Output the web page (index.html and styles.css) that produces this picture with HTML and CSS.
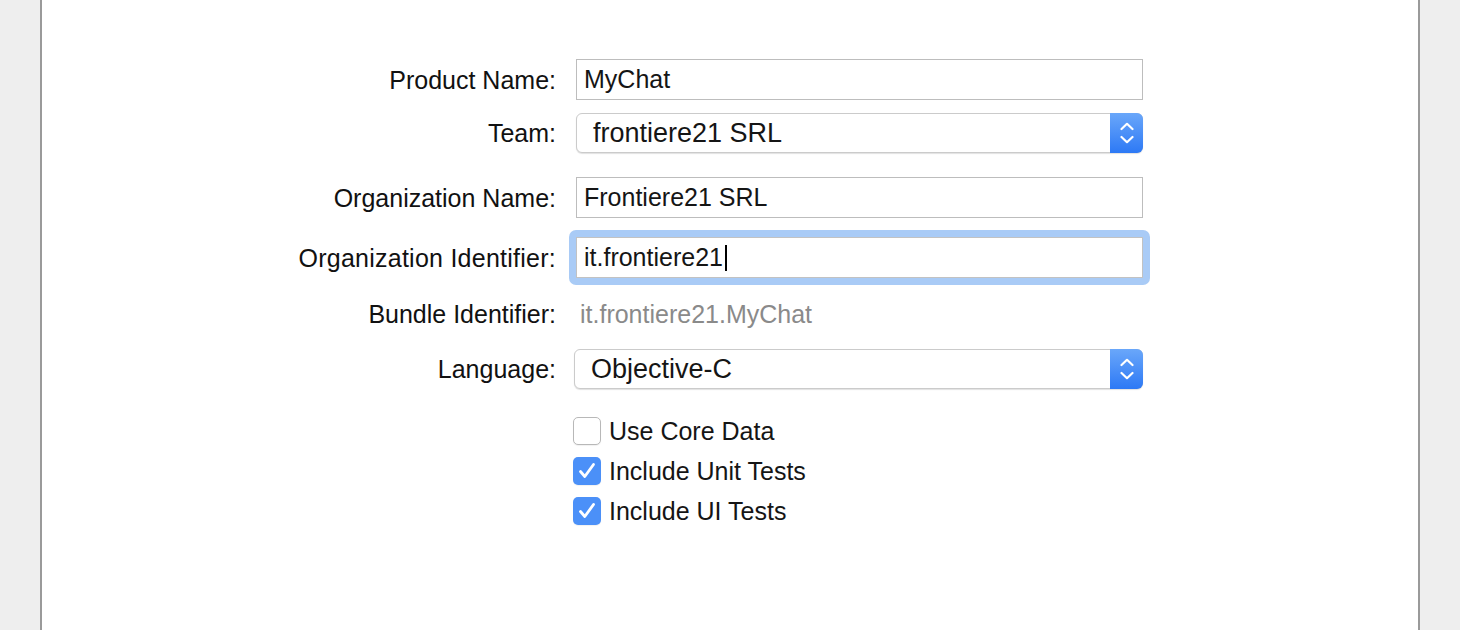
FILE: index.html
```html
<!DOCTYPE html>
<html>
<head>
<meta charset="utf-8">
<link rel="stylesheet" href="styles.css">
</head>
<body>
<div class="panel">
  <div class="form">
    <div class="row r-product">
      <div class="label">Product Name:</div>
      <div class="field">MyChat</div>
    </div>
    <div class="row r-team">
      <div class="label">Team:</div>
      <div class="popup">
        <span class="popup-text">frontiere21 SRL</span>
        <span class="stepper">
          <svg width="14" height="22" viewBox="0 0 14 22"><path d="M1.5 7 L7 1.8 L12.5 7 M1.5 15 L7 20.2 L12.5 15" fill="none" stroke="#fff" stroke-width="2.2" stroke-linecap="round" stroke-linejoin="round"/></svg>
        </span>
      </div>
    </div>
    <div class="row r-org">
      <div class="label">Organization Name:</div>
      <div class="field">Frontiere21 SRL</div>
    </div>
    <div class="row r-orgid">
      <div class="label">Organization Identifier:</div>
      <div class="focus-ring">
        <div class="field focused">it.frontiere21<span class="caret"></span></div>
      </div>
    </div>
    <div class="row r-bundle">
      <div class="label">Bundle Identifier:</div>
      <div class="value">it.frontiere21.MyChat</div>
    </div>
    <div class="row r-lang">
      <div class="label">Language:</div>
      <div class="popup lang">
        <span class="popup-text">Objective-C</span>
        <span class="stepper">
          <svg width="14" height="22" viewBox="0 0 14 22"><path d="M1.5 7 L7 1.8 L12.5 7 M1.5 15 L7 20.2 L12.5 15" fill="none" stroke="#fff" stroke-width="2.2" stroke-linecap="round" stroke-linejoin="round"/></svg>
        </span>
      </div>
    </div>
    <div class="row r-check1">
      <div class="label"></div>
      <div class="check"><span class="box"></span><span>Use Core Data</span></div>
    </div>
    <div class="row r-check2">
      <div class="label"></div>
      <div class="check"><span class="box on"><svg width="28" height="28" viewBox="0 0 28 28"><path d="M7.5 14.5 L11.8 19.5 L20.5 7.5" fill="none" stroke="#fff" stroke-width="2.8" stroke-linecap="round" stroke-linejoin="round"/></svg></span><span>Include Unit Tests</span></div>
    </div>
    <div class="row r-check3">
      <div class="label"></div>
      <div class="check"><span class="box on"><svg width="28" height="28" viewBox="0 0 28 28"><path d="M7.5 14.5 L11.8 19.5 L20.5 7.5" fill="none" stroke="#fff" stroke-width="2.8" stroke-linecap="round" stroke-linejoin="round"/></svg></span><span>Include UI Tests</span></div>
    </div>
  </div>
</div>
</body>
</html>
```
FILE: styles.css
```css
html, body {
  margin: 0;
  padding: 0;
}
body {
  background: #eeeeee;
  padding: 0 40px;
  height: 630px;
  overflow: hidden;
  font-family: "Liberation Sans", Arial, sans-serif;
  font-size: 25px;
  color: #111;
}
.panel {
  background: #fff;
  border-left: 2px solid #9a9a9a;
  border-right: 2px solid #9a9a9a;
  height: 630px;
  box-sizing: border-box;
  padding-top: 59px;
}
.form {
  display: flex;
  flex-direction: column;
}
.row {
  display: grid;
  grid-template-columns: 514px 567px;
  column-gap: 20px;
  align-items: center;
}
.label {
  text-align: right;
  line-height: 26px;
}
.r-orgid .label {
  letter-spacing: 0.25px;
}
.field {
  box-sizing: border-box;
  height: 41px;
  border: 1px solid #bdbdbd;
  background: #fff;
  padding-left: 7px;
  display: flex;
  align-items: center;
  color: #151515;
}
.r-org { margin-top: 24px; }
.r-team { margin-top: 13px; }
.popup {
  box-sizing: border-box;
  height: 40px;
  border: 1px solid #cbcbcb;
  border-radius: 6px;
  box-shadow: 0 1px 1px rgba(0,0,0,0.12);
  display: flex;
  align-items: center;
  justify-content: space-between;
  background: #fff;
}
.popup.lang {
  margin-left: -2px;
}
.popup-text {
  padding-left: 16px;
  color: #151515;
  font-size: 27px;
}
.stepper {
  width: 33px;
  height: 40px;
  margin: -1px -1px -1px 0;
  border-radius: 0 6px 6px 0;
  background: linear-gradient(#6aa7fa, #2d79f5);
  display: flex;
  align-items: center;
  justify-content: center;
}
.stepper svg { display: block; }
.r-orgid { margin-top: 19px; }
.focus-ring {
  margin: -7px;
  padding: 7px;
  background: #a9cbf6;
  border-radius: 7px;
}
.focused {
  border-color: #c2c2c2;
}
.caret {
  display: inline-block;
  width: 2px;
  height: 26px;
  background: #000;
  margin-left: 2px;
}
.r-bundle { margin-top: 23px; }
.value {
  color: #8a8a8a;
  padding-left: 4px;
  line-height: 26px;
}
.r-lang { margin-top: 22px; }
.r-check1 { margin-top: 28px; }
.r-check2, .r-check3 { margin-top: 12px; }
.check {
  display: flex;
  align-items: center;
  gap: 8px;
  margin-left: -3px;
  height: 28px;
  color: #151515;
}
.box {
  box-sizing: border-box;
  width: 28px;
  height: 28px;
  border: 1px solid #b8b8b8;
  border-radius: 5px;
  background: #fff;
  box-shadow: 0 1px 1px rgba(0,0,0,0.06);
  flex: none;
}
.box.on {
  border: none;
  background: #4b90f8;
}
.box svg { display: block; }
```
